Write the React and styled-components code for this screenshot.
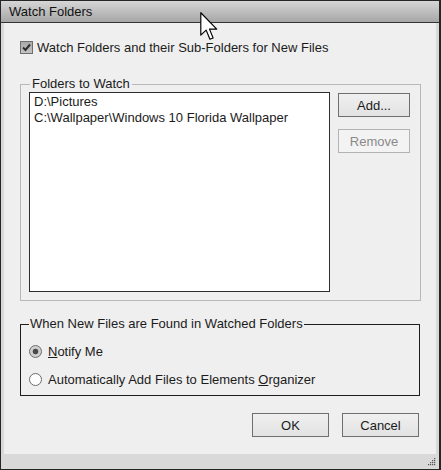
import React, { useState } from 'react'
import styled, { createGlobalStyle } from 'styled-components'

const GlobalStyle = createGlobalStyle`
  html, body {
    margin: 0;
    padding: 0;
    background: #ffffff;
  }
  body {
    font-family: "Liberation Sans", Arial, sans-serif;
    font-size: 13px;
    color: #1b1b1b;
  }
`

const Window = styled.div`
  position: relative;
  width: 441px;
  height: 470px;
  box-sizing: border-box;
  border: 1px solid #262626;
  border-right-width: 2px;
  background: #d9d9d9;
  display: flex;
  flex-direction: column;
  overflow: hidden;
`

const TitleBar = styled.div`
  height: 21px;
  line-height: 21px;
  padding-left: 8px;
  border-bottom: 1px solid #343434;
  background: linear-gradient(#d6d6d6, #a6a6a6);
  font-size: 13px;
  color: #111;
`

const Frame = styled.div`
  flex: 1;
  display: flex;
  padding: 0 3px 15px 3px;
`

const Body = styled.div`
  flex: 1;
  background: #efefef;
  display: flex;
  flex-direction: column;
`

const CheckRow = styled.label`
  display: flex;
  align-items: center;
  gap: 4px;
  height: 15px;
  margin: 17px 0 0 16px;
`

const CheckBox = styled.span`
  width: 11px;
  height: 11px;
  border: 1px solid #6e6e6e;
  background: linear-gradient(#a9a9a9, #c4c4c4);
  display: flex;
  align-items: center;
  justify-content: center;
`

const Group = styled.fieldset`
  margin: ${p => p.$top}px ${p => p.$right}px 0 16px;
  padding: 0 ${p => p.$padRight}px ${p => p.$padBottom}px 8px;
  border: 1px solid ${p => p.$line};
  min-width: 0;
`

const Legend = styled.legend`
  line-height: 16px;
  font-size: 13px;
  padding: 0 ${p => p.$pad}px;
  margin-left: ${p => p.$shift}px;
  color: #1b1b1b;
`

const FolderArea = styled.div`
  display: flex;
  gap: 8px;
`

const ListBox = styled.div`
  width: 295px;
  height: 197px;
  border: 1px solid #2e2e2e;
  background: #ffffff;
  padding: 1px 0 0 4px;
`

const ListItem = styled.div`
  line-height: 16px;
  white-space: nowrap;
`

const ButtonColumn = styled.div`
  display: flex;
  flex-direction: column;
  gap: 12px;
  margin-top: 1px;
`

const Button = styled.button`
  width: ${p => p.$w}px;
  height: 24px;
  box-sizing: border-box;
  padding: 0;
  font-family: "Liberation Sans", Arial, sans-serif;
  font-size: 13px;
  color: ${p => (p.disabled ? '#8a8a8a' : '#1b1b1b')};
  border: 1px solid ${p => (p.disabled ? '#b3b3b3' : '#6f6f6f')};
  background: ${p =>
    p.disabled ? '#f3f3f3' : 'linear-gradient(#f0f0f0, #e2e2e2)'};
  border-radius: 0;
`

const RadioRow = styled.label`
  display: flex;
  align-items: center;
  gap: 6px;
  height: 28px;
`

const RadioDot = styled.span`
  width: 11px;
  height: 11px;
  border-radius: 50%;
  border: 1px solid #6c6c6c;
  background: ${p => (p.$on ? 'radial-gradient(circle, #4a4a4a 0 2.5px, #cfcfcf 3.2px)' : '#ffffff')};
`

const RadioList = styled.div`
  padding-top: 5px;
`

const Footer = styled.div`
  display: flex;
  justify-content: flex-end;
  gap: 13px;
  margin: 17px 17px 0 0;
`

const Cursor = styled.svg`
  position: absolute;
  left: 199px;
  top: 11px;
`

const Grip = styled.svg`
  position: absolute;
  right: 3px;
  bottom: 3px;
`

export default function App() {
  const [mode, setMode] = useState('notify')
  const folders = ['D:\\Pictures', 'C:\\Wallpaper\\Windows 10 Florida Wallpaper']

  return (
    <>
      <GlobalStyle />
      <Window>
        <TitleBar>Watch Folders</TitleBar>
        <Frame>
          <Body>
            <CheckRow>
              <CheckBox>
                <svg width="9" height="9" viewBox="0 0 9 9">
                  <path d="M1 4.5 L3.5 7 L8 1.5" fill="none" stroke="#2e2e2e" strokeWidth="2" />
                </svg>
              </CheckBox>
              Watch Folders and their Sub-Folders for New Files
            </CheckRow>

            <Group $top={21} $right={15} $padRight={10} $padBottom={8} $line="#b8b8b8">
              <Legend $pad={2} $shift={1}>Folders to Watch</Legend>
              <FolderArea>
                <ListBox>
                  {folders.map(f => (
                    <ListItem key={f}>{f}</ListItem>
                  ))}
                </ListBox>
                <ButtonColumn>
                  <Button $w={72}>Add...</Button>
                  <Button $w={72} disabled>Remove</Button>
                </ButtonColumn>
              </FolderArea>
            </Group>

            <Group $top={15} $right={16} $padRight={8} $padBottom={2} $line="#1e1e1e">
              <Legend $pad={1} $shift={0}>When New Files are Found in Watched Folders</Legend>
              <RadioList>
                <RadioRow onClick={() => setMode('notify')}>
                  <RadioDot $on={mode === 'notify'} />
                  <span><u>N</u>otify Me</span>
                </RadioRow>
                <RadioRow onClick={() => setMode('auto')}>
                  <RadioDot $on={mode === 'auto'} />
                  <span>Automatically Add Files to Elements <u>O</u>rganizer</span>
                </RadioRow>
              </RadioList>
            </Group>

            <Footer>
              <Button $w={77}>OK</Button>
              <Button $w={77}>Cancel</Button>
            </Footer>
          </Body>
        </Frame>

        <Grip width="8" height="8" viewBox="0 0 8 8">
          {[[6, 0], [4, 2], [6, 2], [2, 4], [4, 4], [6, 4], [0, 6], [2, 6], [4, 6], [6, 6]].map(([x, y]) => (
            <rect key={`${x}-${y}`} x={x} y={y} width="1.2" height="1.2" fill="#555" />
          ))}
        </Grip>

        <Cursor width="19" height="29" viewBox="0 0 13 20">
          <path
            d="M0.5 0.5 L0.5 16 L4.2 12.5 L6.8 18.8 L9 17.9 L6.5 11.8 L11.5 11.8 Z"
            fill="#ffffff"
            stroke="#000000"
            strokeWidth="0.8"
            strokeLinejoin="round"
          />
        </Cursor>
      </Window>
    </>
  )
}
